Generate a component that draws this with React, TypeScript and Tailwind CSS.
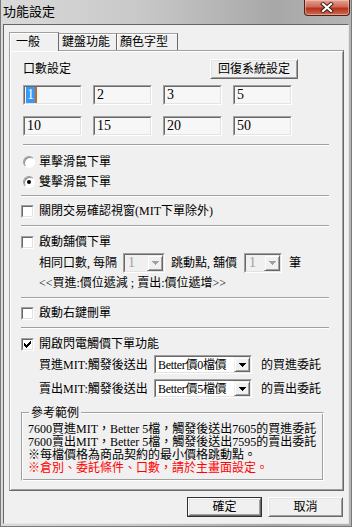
import React from 'react'

const font = "font-['Liberation_Serif','Noto_Sans_CJK_TC',serif]"

function Arrow({ color = '#000' }: { color?: string }) {
  return (
    <svg width="7" height="4" viewBox="0 0 7 4" shapeRendering="crispEdges">
      <path d="M0 0H7V1H6V2H5V3H4V4H3V3H2V2H1V1H0Z" fill={color} />
    </svg>
  )
}

function Field({ value, selected }: { value: string; selected?: boolean }) {
  return (
    <div className="h-[20px] w-[59px] border border-t-[#a0a0a0] border-l-[#a0a0a0] border-r-white border-b-white">
      <div className="flex h-full items-center border border-t-[#696969] border-l-[#696969] border-r-[#e3e3e3] border-b-[#e3e3e3] bg-[#f7f7f7] pl-[1px] text-[14px] leading-[16px]">
        {selected ? (
          <>
            <span className="h-[16px] bg-[#3399ff] px-[1px] text-white">{value}</span>
            <span className="h-[16px] w-[2px] bg-[#cc6a10]" />
          </>
        ) : (
          <span className="px-[1px]">{value}</span>
        )}
      </div>
    </div>
  )
}

function Check({ checked }: { checked?: boolean }) {
  return (
    <div className="h-[13px] w-[13px] shrink-0 border border-t-[#a0a0a0] border-l-[#a0a0a0] border-r-white border-b-white">
      <div className="h-full w-full border border-t-[#696969] border-l-[#696969] border-r-[#e3e3e3] border-b-[#e3e3e3] bg-white">
        {checked && (
          <svg width="9" height="9" viewBox="0 0 9 9" shapeRendering="crispEdges">
            <path d="M1 3H2V4H3V5H4V4H5V3H6V2H7V1H8V4H7V5H6V6H5V7H4V8H3V7H2V6H1Z" fill="#000" />
          </svg>
        )}
      </div>
    </div>
  )
}

function Radio({ checked }: { checked?: boolean }) {
  return (
    <div className="flex h-[12px] w-[12px] shrink-0 items-center justify-center rounded-full border border-t-[#a0a0a0] border-l-[#a0a0a0] border-r-white border-b-white bg-white shadow-[inset_1px_1px_0_#8a8a8a]">
      {checked && <div className="h-[4px] w-[4px] rounded-full bg-black" />}
    </div>
  )
}

function Separator({ className = '' }: { className?: string }) {
  return <div className={`h-0 border-t border-b border-t-[#a0a0a0] border-b-white ${className}`} />
}

function DropButton({ disabled }: { disabled?: boolean }) {
  return (
    <div className="flex h-full w-[16px] items-center justify-center border border-t-[#f0f0f0] border-l-[#f0f0f0] border-r-[#696969] border-b-[#696969] bg-[#f0f0f0] shadow-[inset_1px_1px_0_white,inset_-1px_-1px_0_#a0a0a0]">
      <Arrow color={disabled ? '#a0a0a0' : '#000'} />
    </div>
  )
}

function SmallCombo({ className }: { className: string }) {
  return (
    <div className={`h-[20px] border border-t-[#a0a0a0] border-l-[#a0a0a0] border-r-white border-b-white ${className}`}>
      <div className="flex h-full items-center border border-t-[#696969] border-l-[#696969] border-r-[#e3e3e3] border-b-[#e3e3e3] bg-[#f0f0f0]">
        <span className="flex-1 pl-[3px] text-[14px] leading-none text-[#a0a0a0]">1</span>
        <DropButton disabled />
      </div>
    </div>
  )
}

function Select({ value }: { value: string }) {
  return (
    <div className="h-[19px] w-[98px] border border-t-[#a0a0a0] border-l-[#a0a0a0] border-r-white border-b-white">
      <div className="flex h-full items-center border border-t-[#696969] border-l-[#696969] border-r-[#e3e3e3] border-b-[#e3e3e3] bg-white">
        <span className="flex-1 pl-[2px] text-[12px] leading-none tracking-[-0.3px]">{value}</span>
        <DropButton />
      </div>
    </div>
  )
}

function Button({ label, primary, className = '' }: { label: string; primary?: boolean; className?: string }) {
  return (
    <div className={`h-[20px] ${primary ? 'border border-[#303030]' : ''} ${className}`}>
      <div className="flex h-full items-center justify-center border border-t-white border-l-white border-r-[#696969] border-b-[#696969] bg-[#f0f0f0] text-[12px] leading-none shadow-[inset_1px_1px_0_#e3e3e3,inset_-1px_-1px_0_#a0a0a0]">
        {label}
      </div>
    </div>
  )
}

function Row({ children, className = '' }: { children: React.ReactNode; className?: string }) {
  return <div className={`flex h-[14px] items-center text-[12px] leading-[14px] ${className}`}>{children}</div>
}

export default function App() {
  return (
    <div
      className={`flex h-[527px] w-[352px] flex-col border-x border-b border-[#7a7a7a] bg-[linear-gradient(90deg,#dadada,#c8c8c8_40%,#a8a8a8_78%,#b4b4b4)] text-black ${font}`}
    >
      <div className="flex h-[24px] items-start">
        <span className="pl-[2px] pt-[4px] text-[13px] leading-[15px]">功能設定</span>
        <div className="ml-auto mr-[1px] flex h-[16px] w-[46px] items-center justify-center rounded-b-[4px] border border-t-0 border-[#4a2018] bg-[linear-gradient(#e4a192,#cf6a55_45%,#b6321c_55%,#cf6a52)] shadow-[inset_0_0_0_1px_rgba(255,210,200,0.5)]">
          <svg width="14" height="11" viewBox="0 0 14 11">
            <path d="M3 2L11 9M11 2L3 9" stroke="#3a1a14" strokeWidth="4" strokeLinecap="square" />
            <path d="M3 2L11 9M11 2L3 9" stroke="#ffffff" strokeWidth="2.2" strokeLinecap="square" />
          </svg>
        </div>
      </div>

      <div className="mx-[2px] mb-[2px] flex flex-1 flex-col border border-t-[#666] border-l-[#666] border-r-[#e6e6e6] border-b-[#e6e6e6] bg-[#f0f0f0]">
        <div className="ml-[5px] mt-[7px] flex h-[18px] items-end text-[12px] leading-none">
          <div className="relative z-10 -mb-px flex h-[19px] w-[50px] items-start border-l border-r border-t border-t-[#a0a0a0] border-l-[#a0a0a0] border-r-[#696969] bg-[#f0f0f0] pl-[6px] pt-[3px] shadow-[inset_1px_1px_0_white]">
            一般
          </div>
          <div className="flex h-[17px] w-[58px] items-start border-r border-t border-t-[#a0a0a0] border-r-[#696969] pl-[3px] pt-[2px] shadow-[inset_0_1px_0_white]">
            鍵盤功能
          </div>
          <div className="flex h-[17px] w-[61px] items-start border-r border-t border-t-[#a0a0a0] border-r-[#696969] pl-[3px] pt-[2px] shadow-[inset_1px_1px_0_white]">
            顏色字型
          </div>
        </div>

        <div className="ml-[5px] flex h-[441px] w-[335px] flex-col border border-t-[#a0a0a0] border-l-[#a0a0a0] border-r-[#696969] border-b-[#696969] pl-[11px] pr-[14px] shadow-[inset_1px_1px_0_white,inset_-1px_-1px_0_#a0a0a0]">
          <div className="mt-[8px] flex h-[20px] items-center">
            <span className="ml-[2px] text-[12px] leading-none">口數設定</span>
            <Button label="回復系統設定" className="ml-auto mr-[31px] w-[88px]" />
          </div>

          <div className="ml-[2px] mt-[6px] flex gap-[11px]">
            <Field value="1" selected />
            <Field value="2" />
            <Field value="3" />
            <Field value="5" />
          </div>
          <div className="ml-[2px] mt-[11px] flex gap-[11px]">
            <Field value="10" />
            <Field value="15" />
            <Field value="20" />
            <Field value="50" />
          </div>

          <Separator className="ml-[2px] mt-[8px]" />

          <Row className="ml-[2px] mt-[9px] gap-[4px]">
            <Radio />
            <span>單擊滑鼠下單</span>
          </Row>
          <Row className="ml-[2px] mt-[6px] gap-[4px]">
            <Radio checked />
            <span>雙擊滑鼠下單</span>
          </Row>

          <Separator className="mt-[6px]" />

          <Row className="mt-[7px] gap-[5px]">
            <Check />
            <span>關閉交易確認視窗(MIT下單除外)</span>
          </Row>

          <Separator className="mt-[7px]" />

          <Row className="mt-[8px] gap-[5px]">
            <Check />
            <span>啟動舖價下單</span>
          </Row>
          <div className="ml-[18px] mt-[4px] flex h-[20px] items-center text-[12px] leading-none">
            <span>相同口數, 每隔</span>
            <SmallCombo className="ml-[6px] w-[42px]" />
            <span className="ml-[6px]">跳動點, 舖價</span>
            <SmallCombo className="ml-[7px] w-[38px]" />
            <span className="ml-[7px]">筆</span>
          </div>
          <Row className="ml-[18px] mt-[3px]">
            <span>&lt;&lt;買進:價位遞減 ; 賣出:價位遞增&gt;&gt;</span>
          </Row>

          <Separator className="mt-[7px]" />

          <Row className="mt-[7px] gap-[5px]">
            <Check />
            <span>啟動右鍵刪單</span>
          </Row>

          <Separator className="mt-[7px]" />

          <Row className="mt-[8px] gap-[5px]">
            <Check checked />
            <span>開啟閃電觸價下單功能</span>
          </Row>
          <div className="ml-[18px] mt-[4px] flex h-[19px] items-center text-[12px] leading-none">
            <span className="w-[115px]">買進MIT:觸發後送出</span>
            <Select value="Better價0檔價" />
            <span className="ml-[9px]">的買進委託</span>
          </div>
          <div className="ml-[18px] mt-[5px] flex h-[19px] items-center text-[12px] leading-none">
            <span className="w-[115px]">賣出MIT:觸發後送出</span>
            <Select value="Better價5檔價" />
            <span className="ml-[9px]">的賣出委託</span>
          </div>

          <div className="relative mt-[14px] w-[303px] border border-t-[#a0a0a0] border-l-[#a0a0a0] border-r-white border-b-white pb-[5px] pl-[6px] pt-[10px] shadow-[inset_1px_1px_0_white,inset_-1px_-1px_0_#a0a0a0]">
            <span className="absolute -top-[7px] left-[7px] bg-[#f0f0f0] px-[2px] text-[12px] leading-[14px]">參考範例</span>
            <div className="text-[12px] leading-[13px]">
              <div>7600買進MIT，Better 5檔，觸發後送出7605的買進委託</div>
              <div>7600賣出MIT，Better 5檔，觸發後送出7595的賣出委託</div>
              <div>※每檔價格為商品契約的最小價格跳動點。</div>
              <div className="text-[#ff0000]">※倉別、委託條件、口數，請於主畫面設定。</div>
            </div>
          </div>
        </div>

        <div className="mt-[6px] flex justify-end gap-[6px] pr-[5px]">
          <Button label="確定" primary className="w-[75px]" />
          <Button label="取消" className="w-[75px]" />
        </div>
      </div>
    </div>
  )
}
